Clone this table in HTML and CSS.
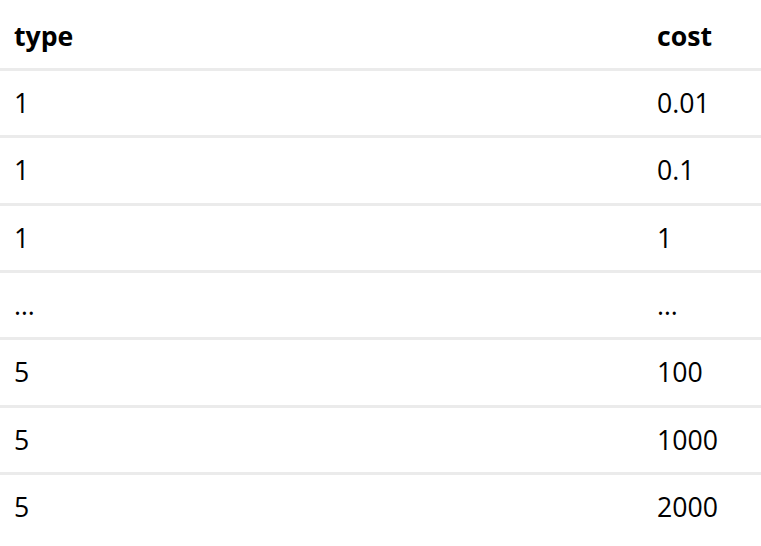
FILE: index.html
```html
<!DOCTYPE html>
<html>
<head>
<meta charset="utf-8">
<link rel="stylesheet" href="styles.css">
</head>
<body>
<table class="grid">
  <thead>
    <tr><th class="c1">type</th><th class="c2">cost</th></tr>
  </thead>
  <tbody>
    <tr><td>1</td><td>0.01</td></tr>
    <tr><td>1</td><td>0.1</td></tr>
    <tr><td>1</td><td>1</td></tr>
    <tr><td>…</td><td>…</td></tr>
    <tr><td>5</td><td>100</td></tr>
    <tr><td>5</td><td>1000</td></tr>
    <tr><td>5</td><td>2000</td></tr>
  </tbody>
</table>
</body>
</html>
```
FILE: styles.css
```css
html, body {
  margin: 0;
  padding: 0;
  background: #fff;
}
.grid {
  width: 761px;
  border-collapse: collapse;
  font-family: "Open Sans", sans-serif;
  font-size: 26.67px;
  line-height: 36.33px;
  color: #000;
}
.grid th, .grid td {
  text-align: left;
  padding: 14px 14px 14px 14px;
  border-bottom: 3px solid #ebebeb;
}
.grid th {
  font-weight: 700;
  padding-top: 17.67px;
}
.grid tr:last-child td {
  border-bottom: none;
}
.grid .c1 { width: 612px; }
.grid td:nth-child(2), .grid th:nth-child(2) { padding-left: 17px; }
```
